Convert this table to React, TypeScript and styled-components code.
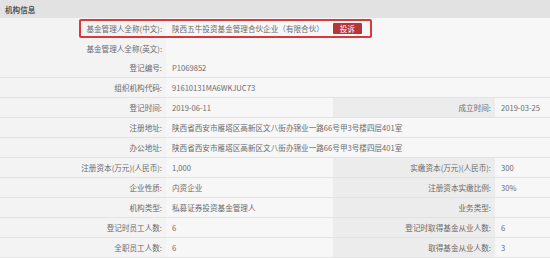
import React from "react";
import styled, { createGlobalStyle } from "styled-components";

const Global = createGlobalStyle`
  html, body { margin: 0; padding: 0; background: #f5f5f5; }
  body { width: 550px; height: 258px; overflow: hidden; font-family: "Noto Sans CJK SC", "Noto Sans", sans-serif; }
`;

const Panel = styled.div`
  position: relative;
  width: 550px;
  background: #f6f6f6;
  color: #6b6b6b;
  font-size: 7.6px;
`;

const Header = styled.div`
  height: 18px;
  display: flex;
  align-items: center;
  padding-left: 5px;
  background: #e2e2e2;
  color: #555;
  font-weight: bold;
`;

const Row = styled.div<{ $short?: boolean }>`
  display: grid;
  grid-template-columns: 166px 167px 162px 55px;
  height: 20px;
  box-sizing: border-box;
  background: ${(p) => (p.$short ? "linear-gradient(to right, #e3e3e3 497px, transparent 497px) bottom / 100% 1px no-repeat" : "none")};
  border-bottom: ${(p) => (p.$short ? "none" : "1px solid #e3e3e3")};
`;

const Label = styled.div<{ $right?: boolean }>`
  display: flex;
  align-items: center;
  justify-content: flex-end;
  padding-right: 4px;
  background: ${(p) => (p.$right ? "#ececec" : "#f3f3f3")};
  white-space: nowrap;
`;

const Value = styled.div<{ $span?: number }>`
  display: flex;
  align-items: center;
  padding-left: 6px;
  white-space: nowrap;
  grid-column: span ${(p) => p.$span ?? 1};
  background: #f7f7f7;
`;

const Badge = styled.span`
  display: inline-flex;
  align-items: center;
  justify-content: center;
  margin-left: 9px;
  width: 29px;
  height: 11px;
  background: #b83535;
  color: #fff;
  border-radius: 1px;
`;

const Highlight = styled.div`
  position: absolute;
  left: 79px;
  top: 19px;
  width: 293px;
  height: 19px;
  box-sizing: border-box;
  border: 2px solid #d8393b;
  border-radius: 2px;
  pointer-events: none;
`;

type Pair = [string, string];

const Full = ({ label, value, short }: { label: string; value: React.ReactNode; short?: boolean }) => (
  <Row $short={short}>
    <Label>{label}</Label>
    <Value $span={3}>{value}</Value>
  </Row>
);

const Double = ({ left, right }: { left: Pair; right: Pair }) => (
  <Row>
    <Label>{left[0]}</Label>
    <Value>{left[1]}</Value>
    <Label $right>{right[0]}</Label>
    <Value>{right[1]}</Value>
  </Row>
);

export default function App() {
  const addr = "陕西省西安市雁塔区高新区文八街办锦业一路66号甲3号楼四层401室";
  return (
    <>
      <Global />
      <Panel>
        <Header>机构信息</Header>
        <Full
          short
          label="基金管理人全称(中文):"
          value={
            <>
              陕西五牛投资基金管理合伙企业（有限合伙）<Badge>投诉</Badge>
            </>
          }
        />
        <Full short label="基金管理人全称(英文):" value="" />
        <Full label="登记编号:" value="P1069852" />
        <Full label="组织机构代码:" value="91610131MA6WKJUC73" />
        <Double left={["登记时间:", "2019-06-11"]} right={["成立时间:", "2019-03-25"]} />
        <Full label="注册地址:" value={addr} />
        <Full label="办公地址:" value={addr} />
        <Double left={["注册资本(万元)(人民币):", "1,000"]} right={["实缴资本(万元)(人民币):", "300"]} />
        <Double left={["企业性质:", "内资企业"]} right={["注册资本实缴比例:", "30%"]} />
        <Double left={["机构类型:", "私募证券投资基金管理人"]} right={["业务类型:", ""]} />
        <Double left={["登记时员工人数:", "6"]} right={["登记时取得基金从业人数:", "6"]} />
        <Double left={["全职员工人数:", "6"]} right={["取得基金从业人数:", "3"]} />
        <Highlight />
      </Panel>
    </>
  );
}
